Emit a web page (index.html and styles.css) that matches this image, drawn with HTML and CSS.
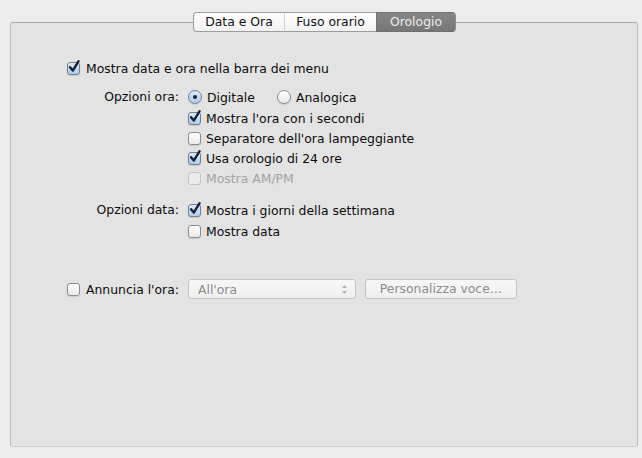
FILE: index.html
```html
<!DOCTYPE html>
<html lang="it">

<head>
    <meta charset="UTF-8">
    <title>Data e Ora - Orologio</title>
    <link rel="stylesheet" href="styles.css">
</head>

<body>
    <div class="tabs">
        <span class="tab">Data e Ora</span>
        <span class="tab">Fuso orario</span>
        <span class="tab active">Orologio</span>
    </div>

    <div class="panel">
        <div class="row main-row">
            <span class="cb checked"><svg viewBox="0 0 14 14"><path d="M3 7.2 L5.8 10.6 L11.6 1.2" /></svg></span>
            <span>Mostra data e ora nella barra dei menu</span>
        </div>

        <div class="group time-group">
            <div class="group-label">Opzioni ora:</div>
            <div class="controls">
                <div class="row radios">
                    <span class="radio-item first"><span class="radio on"></span>Digitale</span>
                    <span class="radio-item"><span class="radio"></span>Analogica</span>
                </div>
                <div class="row">
                    <span class="cb checked"><svg viewBox="0 0 14 14"><path d="M3 7.2 L5.8 10.6 L11.6 1.2" /></svg></span>
                    <span>Mostra l'ora con i secondi</span>
                </div>
                <div class="row">
                    <span class="cb"></span>
                    <span>Separatore dell'ora lampeggiante</span>
                </div>
                <div class="row">
                    <span class="cb checked"><svg viewBox="0 0 14 14"><path d="M3 7.2 L5.8 10.6 L11.6 1.2" /></svg></span>
                    <span>Usa orologio di 24 ore</span>
                </div>
                <div class="row disabled">
                    <span class="cb"></span>
                    <span>Mostra AM/PM</span>
                </div>
            </div>
        </div>

        <div class="group date-group">
            <div class="group-label">Opzioni data:</div>
            <div class="controls">
                <div class="row">
                    <span class="cb checked"><svg viewBox="0 0 14 14"><path d="M3 7.2 L5.8 10.6 L11.6 1.2" /></svg></span>
                    <span>Mostra i giorni della settimana</span>
                </div>
                <div class="row">
                    <span class="cb"></span>
                    <span>Mostra data</span>
                </div>
            </div>
        </div>

        <div class="group announce-group">
            <div class="row announce-label">
                <span class="cb"></span>
                <span>Annuncia l'ora:</span>
            </div>
            <div class="row">
                <span class="popup">
                    <span>All'ora</span>
                    <svg class="arrows" viewBox="0 0 7 11"><path d="M1 4 L3.5 1 L6 4 Z M1 7 L3.5 10 L6 7 Z" /></svg>
                </span>
                <span class="push-button">Personalizza voce…</span>
            </div>
        </div>
    </div>
</body>

</html>
```

FILE: styles.css
```css
body,
html {
    margin: 0;
    height: 100%;
    background-color: #ececec;
    font-family: "DejaVu Sans", "Liberation Sans", sans-serif;
    font-size: 12.4px;
    color: #0c0c0c;
}

/* segmented tab control sitting on the panel edge */
.tabs {
    display: flex;
    justify-content: center;
    margin: 12px 0 -10px 0;
    padding-left: 7px;
    position: relative;
    z-index: 1;
}

.tab {
    box-sizing: border-box;
    height: 20px;
    line-height: 18px;
    text-align: center;
    border: 1px solid #9c9c9c;
    border-left: 1px solid #cfcfcf;
    border-right: none;
    background: linear-gradient(#ffffff, #f1f1f1);
    color: #111;
}

.tab:nth-child(1) {
    width: 91px;
    border-left: 1px solid #9c9c9c;
    border-radius: 4px 0 0 4px;
}

.tab:nth-child(2) {
    width: 92px;
}

.tab.active {
    width: 80px;
    border-color: #6f6f6f;
    border-right: 1px solid #8c8c8c;
    border-radius: 0 4px 4px 0;
    background: linear-gradient(#868686, #767676);
    color: #ececec;
}

.panel {
    box-sizing: border-box;
    margin-left: 10px;
    width: 628px;
    height: 425px;
    padding: 35px 0 0 56px;
    background-color: #e3e3e3;
    border: 1px solid #bdbdbd;
    border-top-color: #a8a8a8;
    border-bottom-color: #cfcfcf;
    border-radius: 3px;
}

.row {
    display: flex;
    align-items: center;
    height: 20px;
    white-space: nowrap;
}

.main-row {
    gap: 6px;
}

.group {
    display: grid;
    grid-template-columns: 112px 1fr;
    column-gap: 9px;
}

.group-label {
    text-align: right;
    line-height: 20px;
}

.controls .row {
    gap: 5px;
}

.time-group {
    margin-top: 9px;
}

.time-group .radios {
    margin-bottom: 1px;
}

.date-group {
    margin-top: 12px;
}

.date-group .row + .row {
    margin-top: 1px;
}

.announce-group {
    margin-top: 38px;
}

.announce-label {
    gap: 6px;
}

.disabled {
    color: #a3a3a3;
}

/* checkbox */
.cb {
    box-sizing: border-box;
    position: relative;
    flex: none;
    width: 13px;
    height: 13px;
    border: 1px solid #8d8d8d;
    border-radius: 3px;
    background: linear-gradient(#ffffff, #e9e9e9);
    box-shadow: 0 1px 1px rgba(0, 0, 0, 0.12);
}

.cb.checked {
    background: linear-gradient(#dfeaf6, #aecbe8);
    border-color: #6f7f95;
}

.cb svg {
    position: absolute;
    left: -1px;
    top: -3px;
    width: 14px;
    height: 14px;
    overflow: visible;
}

.cb svg path {
    fill: none;
    stroke: #18213a;
    stroke-width: 2.4;
    stroke-linecap: round;
    stroke-linejoin: round;
}

.disabled .cb {
    border-color: #c4c4c4;
    background: #ececec;
    box-shadow: none;
}

/* radio buttons */
.radio-item {
    display: flex;
    align-items: center;
    gap: 5px;
}

.radio-item.first {
    width: 84px;
}

.radio {
    box-sizing: border-box;
    position: relative;
    width: 14px;
    height: 14px;
    border: 1px solid #8d8d8d;
    border-radius: 50%;
    background: linear-gradient(#ffffff, #e8e8e8);
    box-shadow: 0 1px 1px rgba(0, 0, 0, 0.12);
}

.radio.on {
    background: linear-gradient(#dfeaf6, #aecbe8);
    border-color: #6f7f95;
}

.radio.on::after {
    content: '';
    position: absolute;
    left: 4px;
    top: 4px;
    width: 4px;
    height: 4px;
    border-radius: 50%;
    background-color: #18213a;
}

/* disabled popup and button */
.popup,
.push-button {
    box-sizing: border-box;
    height: 20px;
    border: 1px solid #c3c3c3;
    border-radius: 3px;
    background: linear-gradient(#f7f7f7, #efefef);
    color: #8c8c8c;
}

.popup {
    display: flex;
    align-items: center;
    justify-content: space-between;
    width: 168px;
    padding: 0 7px 0 9px;
}

.arrows {
    width: 7px;
    height: 11px;
}

.arrows path {
    fill: #b3b3b3;
}

.push-button {
    width: 152px;
    margin-left: 9px;
    line-height: 18px;
    text-align: center;
}
```
